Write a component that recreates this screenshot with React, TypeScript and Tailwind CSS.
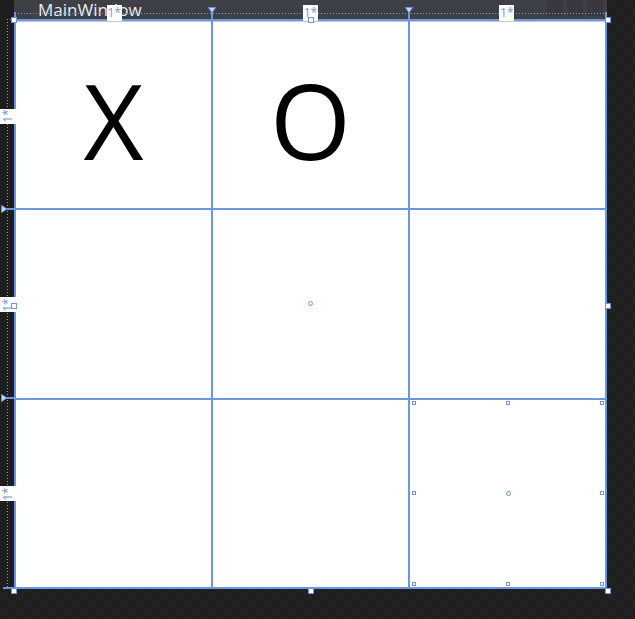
import React from "react";

const Handle = () => <div className="w-[6px] h-[6px] border border-[#6b96e4] bg-white" />;

const SmallHandle = () => <div className="w-[4px] h-[4px] border border-[#6b96e4] bg-white" />;

const Dot = () => <div className="w-[5px] h-[5px] rounded-full border border-[#6b96e4]" />;

const DownMarker = ({ className }: { className: string }) => (
  <svg className={`absolute top-[7px] ${className}`} width="8" height="7" viewBox="0 0 8 7">
    <polygon points="0.5,0.5 7.5,0.5 4,6" fill="#c9d8f5" stroke="#6b96e4" strokeWidth="1" />
  </svg>
);

const RightMarker = ({ className }: { className: string }) => (
  <svg className={`absolute left-[1px] ${className}`} width="7" height="8" viewBox="0 0 7 8">
    <polygon points="0.5,0.5 0.5,7.5 6,4" fill="#c9d8f5" stroke="#6b96e4" strokeWidth="1" />
  </svg>
);

// three handles spread along one edge
const HandleRow = () => (
  <div className="flex justify-between">
    <Handle />
    <Handle />
    <Handle />
  </div>
);

const SmallRow = ({ mid = true }: { mid?: boolean }) => (
  <div className="flex items-center justify-between">
    <SmallHandle />
    {mid ? <SmallHandle /> : <Dot />}
    <SmallHandle />
  </div>
);

export default function App() {
  const cells = ["X", "O", "", "", "", "", "", "", ""];

  return (
    <div
      className="relative w-[635px] h-[619px] overflow-hidden bg-[repeating-conic-gradient(#1e1e1e_0_25%,#222222_0_50%)] bg-[length:16px_16px]"
      style={{ fontFamily: '"Open Sans", "Liberation Sans", sans-serif' }}
    >
      <div className="grid grid-cols-[14px_593px] grid-rows-[19px_570px]">
        <div className="bg-[#1e1e1e]" />

        {/* Title bar */}
        <div className="flex items-start bg-[#3f3f46] pl-[24px] pr-[4px]">
          <span className="text-[17px] leading-[19px] text-[#ececf0]">MainWindow</span>
          <div className="ml-auto flex gap-[4px]">
            <div className="w-[16px] h-[16px] bg-[#38383e]" />
            <div className="w-[16px] h-[16px] bg-[#38383e]" />
            <div className="w-[16px] h-[16px] bg-[#38383e]" />
          </div>
        </div>

        {/* Row ruler */}
        <div className="bg-[#1e1e1e]" />

        {/* Window content grid */}
        <div className="grid grid-cols-3 grid-rows-3 gap-[2px] border-2 border-[#6b96e4] bg-[#6b96e4]">
          {cells.map((c, i) => (
            <div
              key={i}
              className={`flex items-center justify-center bg-white text-[104px] leading-none text-black ${
                c ? "pt-[10px]" : ""
              } ${i < 3 ? "border-t border-[#c8c8c8]" : ""} ${i === 8 ? "p-[1px]" : ""}`}
            >
              {c}
              {i === 4 && <Dot />}
              {i === 8 && (
                <div className="flex h-full w-full flex-col justify-between pl-[1px] pr-[0px] pb-[0px]">
                  <SmallRow />
                  <SmallRow mid={false} />
                  <SmallRow />
                </div>
              )}
            </div>
          ))}
        </div>
      </div>

      {/* Dotted guides */}
      <div className="absolute left-[15px] top-[13px] w-[590px] h-px bg-[linear-gradient(to_right,#7f9fd8_1px,transparent_1px)] bg-[length:3px_1px]" />
      <div className="absolute left-[7px] top-[19px] w-px h-[568px] bg-[linear-gradient(to_bottom,#7f9fd8_1px,transparent_1px)] bg-[length:1px_3px]" />
      <div className="absolute left-[7px] top-[19px] w-[5px] h-px bg-[linear-gradient(to_right,#7f9fd8_1px,transparent_1px)] bg-[length:3px_1px]" />

      {/* Edge extensions */}
      <div className="absolute left-[14px] top-[12px] w-[2px] h-[8px] bg-[#6b96e4]" />
      <div className="absolute left-[605px] top-[12px] w-[2px] h-[8px] bg-[#6b96e4]" />
      <div className="absolute left-[3px] top-[587px] w-[12px] h-[2px] bg-[#6b96e4]" />

      {/* Column markers */}
      <div className="absolute left-[211px] top-[12px] w-[2px] h-[8px] bg-[#6b96e4]" />
      <div className="absolute left-[408px] top-[12px] w-[2px] h-[8px] bg-[#6b96e4]" />
      <DownMarker className="left-[208px]" />
      <DownMarker className="left-[405px]" />

      {/* Row markers */}
      <div className="absolute left-[6px] top-[208px] w-[9px] h-[2px] bg-[#6b96e4]" />
      <div className="absolute left-[6px] top-[397px] w-[9px] h-[2px] bg-[#6b96e4]" />
      <RightMarker className="top-[205px]" />
      <RightMarker className="top-[394px]" />

      {/* Column size labels */}
      <div className="absolute left-[16px] top-[5px] grid w-[589px] grid-cols-3 justify-items-center">
        {[0, 1, 2].map((k) => (
          <div
            key={k}
            className="flex h-[16px] w-[15px] items-center justify-center bg-white text-[12px] leading-none text-[#6b96e4]"
          >
            1*
          </div>
        ))}
      </div>

      {/* Row size labels */}
      <div className="absolute left-0 top-[22px] grid h-[566px] w-[16px] grid-rows-3 items-center">
        {[0, 1, 2].map((k) => (
          <div key={k} className="flex h-[15px] w-[16px] items-center justify-center bg-white">
            <span className="-rotate-90 text-[12px] leading-none text-[#6b96e4]">1*</span>
          </div>
        ))}
      </div>

      {/* Window resize handles */}
      <div className="absolute left-[11px] top-[17px] flex h-[577px] w-[600px] flex-col justify-between">
        <HandleRow />
        <div className="flex justify-between">
          <Handle />
          <Handle />
        </div>
        <HandleRow />
      </div>
    </div>
  );
}
